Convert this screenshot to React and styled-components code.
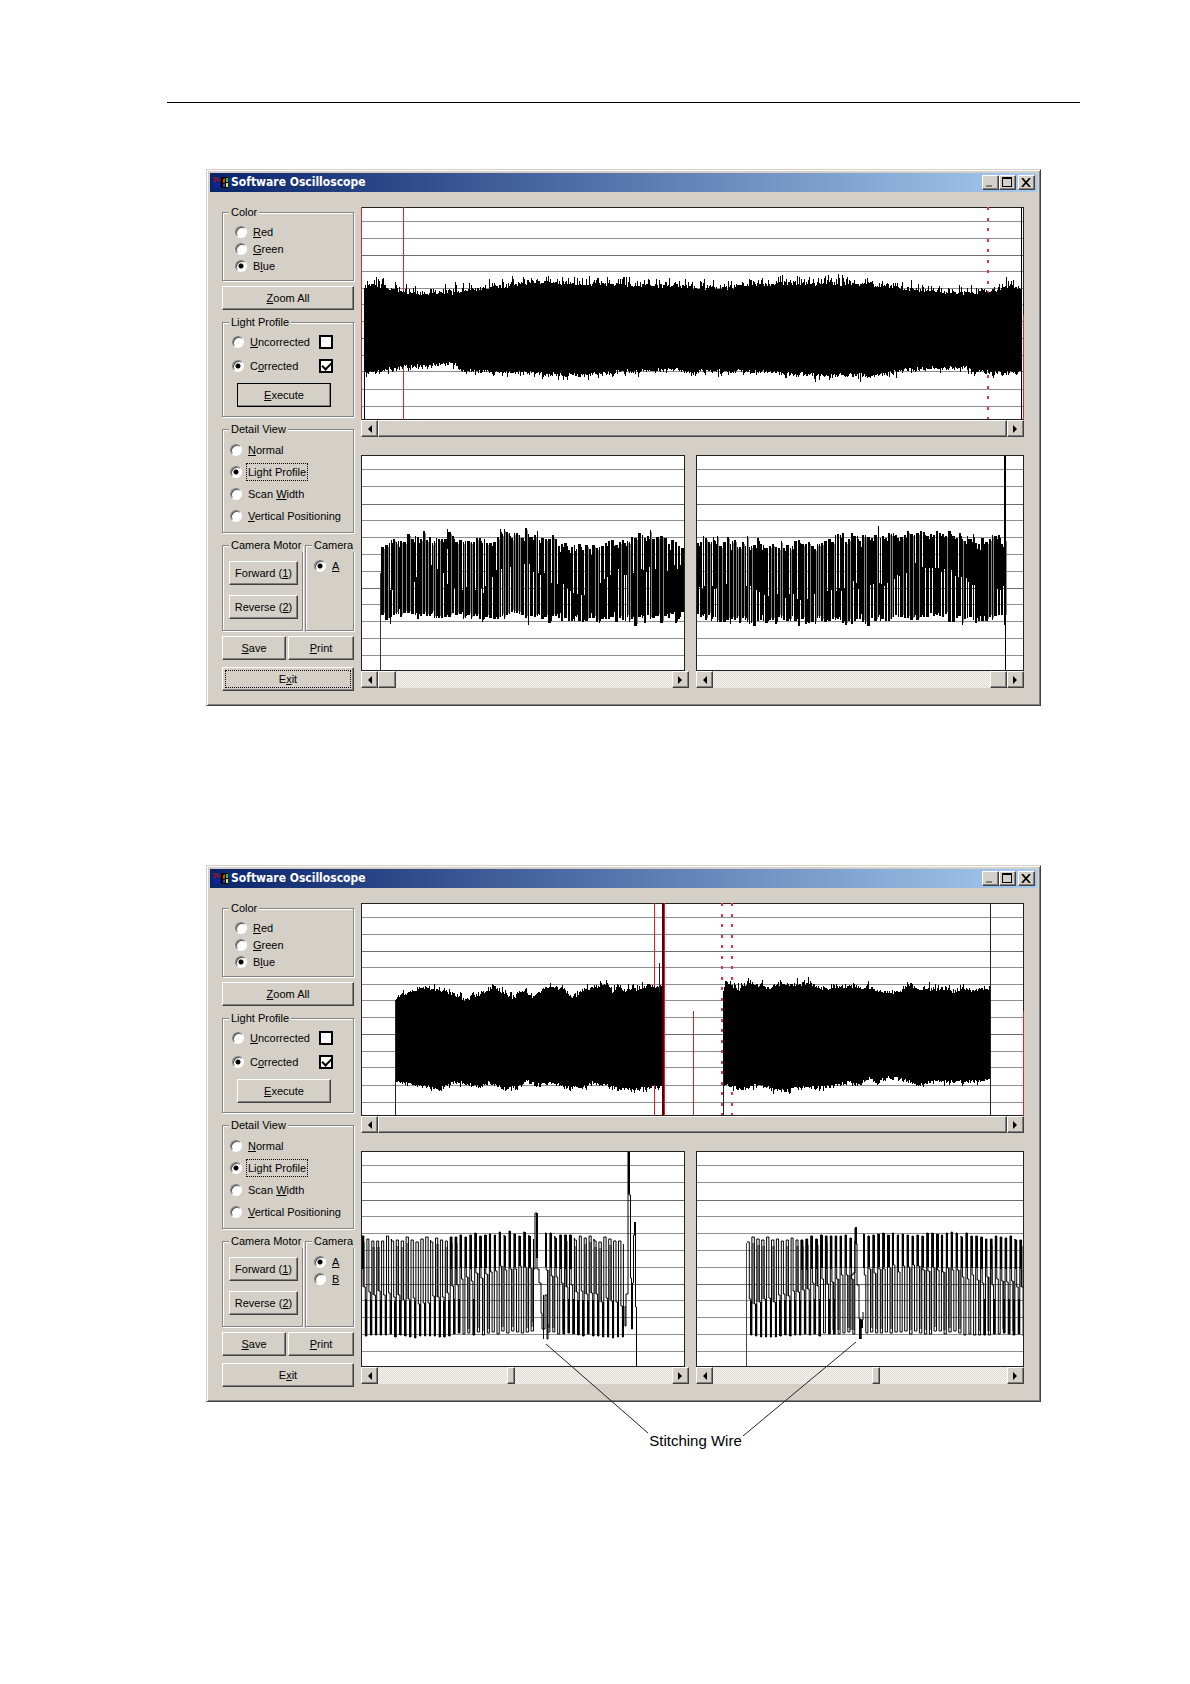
import React, { useId } from "react";
import styled, { createGlobalStyle, css } from "styled-components";

/* ---------- waveform helpers ---------- */

const makeRandom = (seed) => {
  let s = seed;
  return () => {
    s = (s * 16807) % 2147483647;
    return s / 2147483647;
  };
};

// linear interpolation through a list of [x, y] points
const curve = (points, x) => {
  if (x <= points[0][0]) return points[0][1];
  for (let i = 1; i < points.length; i++) {
    const [x1, y1] = points[i];
    if (x <= x1) {
      const [x0, y0] = points[i - 1];
      return y0 + ((y1 - y0) * (x - x0)) / (x1 - x0);
    }
  }
  return points[points.length - 1][1];
};

// filled band with ragged edges, one column for each pixel
const bandPath = ({ top, bottom, from, to, seed, rough }) => {
  const rnd = makeRandom(seed);
  let d = "";
  for (let x = from; x < to; x++) {
    const y0 = Math.round(curve(top, x) + 3 - rnd() * 4 - rnd() ** 4 * rough);
    const y1 = Math.round(curve(bottom, x) - 2 + rnd() * 4 + rnd() ** 5 * rough * 0.6);
    d += `M${x} ${y0}h1V${y1}h-1z`;
  }
  return d;
};

// dense detail trace, returned as a black and a grey path
const densePaths = ({ top, bottom, mid, from, to, seed }) => {
  const rnd = makeRandom(seed);
  let black = "";
  let grey = "";
  let x = from;
  while (x < to) {
    const y0 = Math.round(curve(top, x) + 4 - rnd() * 7 - rnd() ** 4 * 7);
    const y1 = Math.round(curve(bottom, x) - 3 + rnd() * 6 + rnd() ** 5 * 7);
    const m = Math.round(curve(mid, x) - 4 + rnd() * 8);
    const r = rnd();
    const w = r < 0.3 ? 1 : r < 0.75 ? 2 : 3;
    black += `M${x} ${y0}h${w}V${y1}h-${w}z`;
    x += w;
    const p = rnd();
    if (p < 0.27) black += `M${x} ${m}h1V${y1 - 2}h-1z`;
    else if (p < 0.54) black += `M${x} ${y0 + 3}h1V${m}h-1z`;
    else if (p < 0.94) grey += `M${x} ${y0 + 2}h1V${y1 - 2}h-1z`;
    else black += `M${x} ${y0 + 6}h1V${y1 - 5}h-1z`;
    x += 1;
  }
  return { black, grey };
};

// sampled trace drawn as steps: high, shoulder, low for every cycle
const stepPaths = ({ mid, from, to, seed, skip }) => {
  const rnd = makeRandom(seed);
  let line = "";
  let fill = "";
  let spikes = "";
  let x = from;
  let pen = false;
  while (x < to) {
    if (skip && x > skip[0] && x < skip[1]) {
      x = skip[1];
      pen = false;
    }
    const m = curve(mid, x) - 4 + rnd() * 8;
    const k = Math.max(0, Math.min(1, (m - 116) / 34));
    const high = 92 - (1 - k) * 6 - rnd() * 6;
    const low = 180 + k * 4 + rnd() * 3;
    const wHigh = 1 + k * 1.4;
    const wLow = 2.4 - k * 1.4;
    line += `${pen ? "L" : "M"}${x.toFixed(1)} ${high.toFixed(0)}h${wHigh.toFixed(1)}V${m.toFixed(0)}h1.5V${low.toFixed(0)}h${wLow.toFixed(1)}`;
    const high2 = high.toFixed(0);
    const px = Math.round(x);
    if (k < 0.7) spikes += `M${px} ${high2}h2V${(m - k * 30).toFixed(0)}h-2z`;
    if (k > 0.4) spikes += `M${px + 3} ${(m + (1 - k) * 30).toFixed(0)}h2V${low.toFixed(0)}h-2z`;
    if (rnd() < 0.6) {
      fill +=
        k > 0.5
          ? `M${px} ${(high + 6).toFixed(0)}h3V${m.toFixed(0)}h-3z`
          : `M${px + 2} ${m.toFixed(0)}h3V${(low - 4).toFixed(0)}h-3z`;
    }
    x += 4.9;
    line += `V${(high + 3).toFixed(0)}`;
    pen = true;
  }
  return { line, fill, spikes };
};

/* ---------- waveform data ---------- */

const OVERVIEW_LINES = [14, 31, 48, 64, 81, 97, 114, 131, 148, 164, 182, 199];
const DETAIL_LINES = [14, 31, 49, 65, 82, 99, 116, 133, 149, 166, 183, 200];

const BAND_FULL = bandPath({
  seed: 4711,
  from: 3,
  to: 661,
  rough: 9,
  top: [[3, 80], [12, 76], [22, 79], [42, 85], [62, 86], [89, 85], [112, 81], [146, 79], [166, 75], [196, 75], [229, 76], [262, 77], [296, 78], [329, 79], [349, 81], [362, 81], [379, 78], [416, 76], [472, 76], [516, 77], [539, 80], [579, 85], [602, 85], [626, 84], [649, 78], [661, 81]],
  bottom: [[3, 165], [22, 163], [42, 160], [92, 156], [99, 163], [139, 165], [166, 166], [206, 168], [246, 166], [296, 162], [312, 161], [329, 166], [339, 163], [406, 165], [466, 168], [516, 168], [546, 163], [572, 160], [602, 160], [622, 165], [660, 166]],
});

const BAND_A = bandPath({
  seed: 911,
  from: 35,
  to: 302,
  rough: 5,
  top: [[34, 97], [36, 93], [39, 91], [49, 88], [61, 84], [72, 86], [89, 89], [104, 96], [116, 91], [134, 84], [151, 94], [164, 87], [171, 93], [186, 83], [202, 85], [211, 94], [222, 86], [246, 82], [251, 88], [256, 82], [262, 87], [276, 86], [289, 82], [301, 84]],
  bottom: [[36, 178], [49, 181], [79, 186], [94, 178], [106, 181], [119, 184], [127, 179], [142, 186], [156, 184], [164, 178], [176, 182], [192, 179], [206, 185], [222, 184], [232, 179], [252, 184], [272, 187], [289, 184], [301, 184]],
});

const BAND_B = bandPath({
  seed: 3203,
  from: 362,
  to: 629,
  rough: 6,
  top: [[362, 85], [365, 79], [378, 86], [387, 78], [396, 81], [406, 85], [417, 80], [436, 81], [447, 80], [462, 85], [476, 83], [489, 82], [497, 85], [506, 82], [516, 87], [526, 90], [539, 87], [549, 81], [559, 86], [572, 85], [592, 87], [626, 85]],
  bottom: [[362, 182], [382, 186], [396, 182], [416, 187], [439, 185], [472, 183], [489, 179], [499, 181], [507, 175], [514, 180], [529, 174], [546, 178], [559, 182], [572, 177], [599, 179], [629, 177]],
});

const DENSE_LEFT = densePaths({
  seed: 77,
  from: 20,
  to: 324,
  top: [[20, 88], [60, 84], [90, 84], [130, 88], [140, 80], [170, 80], [190, 88], [215, 93], [240, 89], [285, 83], [324, 90]],
  bottom: [[20, 162], [50, 160], [100, 161], [120, 162], [150, 157], [180, 162], [240, 165], [324, 159]],
  mid: [[20, 137], [45, 130], [62, 112], [72, 111], [90, 136], [120, 136], [135, 112], [165, 110], [190, 128], [222, 142], [250, 118], [290, 116], [324, 110]],
});

const DENSE_RIGHT = densePaths({
  seed: 5150,
  from: 1,
  to: 309,
  top: [[0, 84], [34, 88], [84, 90], [120, 90], [140, 84], [184, 81], [224, 79], [260, 80], [270, 86], [309, 85]],
  bottom: [[0, 160], [30, 165], [90, 164], [150, 165], [200, 163], [240, 159], [280, 164], [309, 160]],
  mid: [[0, 130], [30, 132], [60, 136], [84, 142], [120, 140], [150, 130], [190, 130], [220, 110], [245, 117], [260, 120], [277, 132], [309, 135]],
});

const STEP_LEFT = stepPaths({
  seed: 29,
  from: 1,
  to: 262,
  skip: [171, 184],
  mid: [[0, 140], [30, 146], [50, 150], [75, 148], [110, 125], [150, 116], [178, 118], [205, 135], [245, 150], [265, 152]],
});

const STEP_RIGHT = stepPaths({
  seed: 388,
  from: 51,
  to: 324,
  skip: [154, 167],
  mid: [[51, 152], [80, 146], [110, 135], [150, 126], [185, 117], [240, 116], [262, 124], [290, 130], [328, 135]],
});

/* ---------- small parts ---------- */

// "&Red" -> underlined R
const Mnemonic = ({ text }) => {
  const at = text.indexOf("&");
  if (at < 0) return text;
  return (
    <span>
      {text.slice(0, at)}
      <u>{text[at + 1]}</u>
      {text.slice(at + 2)}
    </span>
  );
};

const Option = ({ name, text, checked, focused, tall }) => (
  <OptionLabel $tall={tall}>
    <Radio type="radio" name={name} defaultChecked={checked} />
    <OptionText $focused={focused}>
      <Mnemonic text={text} />
    </OptionText>
  </OptionLabel>
);

const AppIcon = () => (
  <svg width="17" height="13" viewBox="0 0 17 13" aria-hidden="true">
    <path d="M8 2l3-1h5v11H9l-1-1z" fill="#000" />
    <path d="M1 2h4M3 3h6M1 5h3M5 5h4" stroke="#c01828" />
    <path d="M1 7h4M3 9h5M1 11h3M6 8h3M5 11h4" stroke="#1a22d8" />
    <path d="M11 3l2-1v4l-2 1z" fill="#e03a20" />
    <path d="M14 2h2v4h-2z" fill="#28c83c" />
    <path d="M11 8l2-1v4h-2z" fill="#2840e0" />
    <path d="M14 7h2v4h-2z" fill="#f0e030" />
  </svg>
);

const Arrow = ({ left }) => (
  <svg width="5" height="8" viewBox="0 0 5 8" aria-hidden="true">
    <path d={left ? "M5 0v8L1 4z" : "M0 0v8l4-4z"} />
  </svg>
);

const ScrollBar = ({ label, start, size }) => (
  <ScrollRow role="group" aria-label={label}>
    <ScrollButton type="button" aria-label="Scroll left">
      <Arrow left />
    </ScrollButton>
    <Track>
      <Thumb $start={start} $size={size} />
    </Track>
    <ScrollButton type="button" aria-label="Scroll right">
      <Arrow />
    </ScrollButton>
  </ScrollRow>
);

const GridLines = ({ lines, width }) =>
  lines.map((y, i) => (
    <rect key={y} x="0" y={y} width={width} height="1" fill={i === 2 || i === 7 ? "#6c6c6c" : "#8e8e8e"} />
  ));

const Overview = ({ children }) => (
  <Chart $tall={213} viewBox="0 0 663 213" preserveAspectRatio="none">
    <rect width="663" height="213" fill="#fff" />
    <GridLines lines={OVERVIEW_LINES} width={663} />
    <path d="M0 0h663v1H0zM0 212h663v1H0zM0 0h1v213H0zM662 0h1v213h-1z" fill="#222" />
    {children}
    <path d="M662 108h1v105h-1z" fill="#e0202c" />
  </Chart>
);

const Detail = ({ width, children }) => (
  <Chart $tall={216} viewBox={`0 0 ${width} 216`} preserveAspectRatio="none">
    <rect width={width} height="216" fill="#fff" />
    <GridLines lines={DETAIL_LINES} width={width} />
    {children}
    <path d={`M0 0h${width}v1H0zM0 215h${width}v1H0zM0 0h1v216H0zM${width - 1} 0h1v216h-1z`} fill="#222" />
  </Chart>
);

/* ---------- oscilloscope window ---------- */

const Oscilloscope = ({ cameras, focusExit, defaultExecute, overview, left, right, scroll }) => {
  const id = useId();
  return (
    <Window>
      <TitleBar>
        <AppIcon />
        <Title>Software Oscilloscope</Title>
        <WindowButton type="button" aria-label="Minimize">
          <svg width="10" height="9" viewBox="0 0 10 9">
            <path d="M1 7h6v2H1z" fill="#808080" />
          </svg>
        </WindowButton>
        <WindowButton type="button" aria-label="Maximize">
          <svg width="10" height="10" viewBox="0 0 10 10">
            <path d="M0 0h10v10H0zM1 2v7h8V2z" fillRule="evenodd" />
          </svg>
        </WindowButton>
        <CloseButton type="button" aria-label="Close">
          <svg width="10" height="9" viewBox="0 0 10 9">
            <path d="M1 0l8 9M9 0L1 9" stroke="#000" strokeWidth="1.7" />
          </svg>
        </CloseButton>
      </TitleBar>
      <Body>
        <Sidebar>
          <Group>
            <Legend>Color</Legend>
            <ColorOptions>
              <Option name={`${id}color`} text="&Red" />
              <Option name={`${id}color`} text="&Green" />
              <Option name={`${id}color`} text="B&lue" checked />
            </ColorOptions>
          </Group>
          <Button type="button">
            <Mnemonic text="&Zoom All" />
          </Button>
          <Group>
            <Legend>Light Profile</Legend>
            <ProfileOptions>
              <ProfileRow>
                <Option name={`${id}profile`} text="&Uncorrected" tall />
                <CheckBox type="checkbox" aria-label="Show uncorrected" />
              </ProfileRow>
              <ProfileRow>
                <Option name={`${id}profile`} text="C&orrected" checked tall />
                <CheckBox type="checkbox" aria-label="Show corrected" defaultChecked />
              </ProfileRow>
              <ExecuteButton type="button" $default={defaultExecute}>
                <Mnemonic text="&Execute" />
              </ExecuteButton>
            </ProfileOptions>
          </Group>
          <Group>
            <Legend>Detail View</Legend>
            <ViewOptions>
              <Option name={`${id}view`} text="&Normal" tall />
              <Option name={`${id}view`} text="Li&ght Profile" checked focused tall />
              <Option name={`${id}view`} text="Scan &Width" tall />
              <Option name={`${id}view`} text="&Vertical Positioning" tall />
            </ViewOptions>
          </Group>
          <CameraRow>
            <Group>
              <Legend>Camera Motor</Legend>
              <MotorButtons>
                <Button type="button">
                  <Mnemonic text="Forward (&1)" />
                </Button>
                <Button type="button">
                  <Mnemonic text="Reverse (&2)" />
                </Button>
              </MotorButtons>
            </Group>
            <Group>
              <Legend>Camera</Legend>
              <CameraOptions>
                {cameras.map((camera, i) => (
                  <Option key={camera} name={`${id}camera`} text={`&${camera}`} checked={i === 0} />
                ))}
              </CameraOptions>
            </Group>
          </CameraRow>
          <Actions>
            <Button type="button">
              <Mnemonic text="&Save" />
            </Button>
            <Button type="button">
              <Mnemonic text="&Print" />
            </Button>
            <ExitButton type="button" $focused={focusExit}>
              <Mnemonic text="E&xit" />
            </ExitButton>
          </Actions>
        </Sidebar>
        <Plots>
          <Panel>
            <Overview>{overview}</Overview>
            <ScrollBar label="Overview position" start="0" size="100%" />
          </Panel>
          <DetailRow>
            <Panel>
              <NarrowPlot>
                <Detail width={324}>{left}</Detail>
              </NarrowPlot>
              <ScrollBar label="Left detail position" {...scroll[0]} />
            </Panel>
            <Panel>
              <Detail width={328}>{right}</Detail>
              <ScrollBar label="Right detail position" {...scroll[1]} />
            </Panel>
          </DetailRow>
        </Plots>
      </Body>
    </Window>
  );
};

const App = () => {
  return (
    <Page>
      <GlobalStyle />
      <Rule />
      <Figure>
        <Oscilloscope
          cameras={["A"]}
          focusExit
          defaultExecute
          scroll={[
            { start: "0", size: "18px" },
            { start: "auto", size: "17px" },
          ]}
          overview={
            <>
              <path d="M0 0h1v213H0zM42 0h1v213h-1z" fill="#e8202c" />
              <Marker d="M627 0v212" />
              <path d={BAND_FULL} />
              <path d="M3 160h1v53H3zM660 0h1v213h-1z" />
            </>
          }
          left={
            <>
              <path d="M19 118h1v98h-1z" fill="#333" />
              <path d={DENSE_LEFT.black} />
              <path d={DENSE_LEFT.grey} fill="#858585" />
              <path d="M86 74h1v20h-1zM29 150h1v19h-1zM167 150h1v20h-1z" />
            </>
          }
          right={
            <>
              <path d={DENSE_RIGHT.black} />
              <path d={DENSE_RIGHT.grey} fill="#858585" />
              <path d="M182 71h1v30h-1zM308 0h2v170h-2zM309 160h1v56h-1z" />
            </>
          }
        />
      </Figure>
      <Figure>
        <Oscilloscope
          cameras={["A", "B"]}
          scroll={[
            { start: "44%", size: "8px" },
            { start: "54%", size: "8px" },
          ]}
          overview={
            <>
              <path d="M293 0h1v213h-1zM332 108h1v105h-1z" fill="#d8202c" />
              <path d={BAND_A} />
              <path d={BAND_B} />
              <path d="M34 97h1v116h-1zM298 60h1v30h-1zM362 170h1v43h-1zM629 0h1v213h-1z" fill="#222" />
              <path d="M301 0h2v213h-2z" fill="#5a0008" />
              <path d="M303 0h1v213h-1z" fill="#d8202c" />
              <Marker d="M361 0v212M371 0v80M371 189v23" />
            </>
          }
          left={
            <>
              <path d={STEP_LEFT.fill} fill="#8a8a8a" />
              <Trace d={STEP_LEFT.line} />
              <path d={STEP_LEFT.spikes} />
              <Trace d="M172 171V118h2V62h2v56h2v14h2v30h1v16h3V144h2v44h1v-15" />
              <path d="M175 62h2v45h-2zM182 144h1v44h-1zM267 0h2v43h-2zM273 71h2v13h-2z" />
              <Trace d="M264 155v20h1V143h2V0h1v44h1.500v83h1V178h1V132h1V84h2V71v85h1v60" />
            </>
          }
          right={
            <>
              <path d={STEP_RIGHT.fill} fill="#8a8a8a" />
              <Trace d={STEP_RIGHT.line} />
              <path d={STEP_RIGHT.spikes} />
              <path d="M50 92h1v124h-1z" fill="#444" />
              <Trace d="M155 179V124h2V122h2V77h1v16h1v41h2v34h2V188v-19h2v-8" />
              <path d="M159 76h2v17h-2zM163 168h2v20h-2zM165 169h2v8h-2z" />
            </>
          }
        />
        <Caption>Stitching Wire</Caption>
        <Callout viewBox="0 0 835 580" preserveAspectRatio="none" aria-hidden="true">
          <path d="M340 479l102 89M650 477l-113 94" stroke="#222" fill="none" />
        </Callout>
      </Figure>
    </Page>
  );
};

export default App;

/* ---------- styles ---------- */

const GlobalStyle = createGlobalStyle`
  * {
    box-sizing: border-box;
  }
  body {
    margin: 0;
    background: #fff;
  }
`;

const Page = styled.main`
  min-height: 100vh;
  padding: 102px 110px 0 167px;
  font-family: "Liberation Sans", Arial, sans-serif;
  font-size: 11px;
  line-height: 14px;
  color: #000;
`;

const Rule = styled.hr`
  height: 1px;
  margin: 0 0 66px;
  border: 0;
  background: #000;
`;

const Figure = styled.figure`
  position: relative;
  margin: 0 0 159px;
  padding: 0 39px;
`;

const Caption = styled.figcaption`
  padding: 30px 0 0 144px;
  font-size: 15px;
  line-height: 18px;
  text-align: center;
`;

const Callout = styled.svg`
  position: absolute;
  top: 0;
  left: 39px;
  width: calc(100% - 78px);
  height: 580px;
  pointer-events: none;
`;

const Window = styled.section`
  padding: 3px;
  border: 1px solid;
  border-color: #d4d0c8 #404040 #404040 #d4d0c8;
  background: #d4d0c8;
  box-shadow: inset 1px 1px 0 #fff, inset -1px -1px 0 #808080;
`;

const TitleBar = styled.header`
  display: flex;
  align-items: center;
  height: 19px;
  padding: 0 2px;
  background: linear-gradient(90deg, #0a246a, #a6caf0);
`;

const Title = styled.h2`
  flex: 1;
  margin: 0 0 0 2px;
  font-family: "DejaVu Sans Condensed", "Open Sans", sans-serif;
  font-size: 12px;
  font-weight: 700;
  line-height: 19px;
  color: #fff;
`;

const raised = css`
  border: 1px solid;
  border-color: #fff #404040 #404040 #fff;
  background: #d4d0c8;
  box-shadow: inset -1px -1px 0 #808080;
`;

const WindowButton = styled.button`
  ${raised}
  display: flex;
  align-items: center;
  justify-content: center;
  width: 17px;
  height: 15px;
  padding: 0 1px 1px 0;
`;

const CloseButton = styled(WindowButton)`
  margin-left: 2px;
`;

const Body = styled.div`
  display: flex;
  gap: 7px;
  padding: 13px 13px 11px 12px;
`;

const Sidebar = styled.div`
  display: flex;
  flex: none;
  flex-direction: column;
  gap: 5px;
  width: 132px;
`;

const Group = styled.fieldset`
  min-width: 0;
  margin: 0;
  padding: 0 0 0 6px;
  border: 1px solid #848284;
  box-shadow: 1px 1px 0 #fff, inset 1px 1px 0 #fff;
`;

const Legend = styled.legend`
  padding: 0 2px;
  background: #d4d0c8;
  white-space: nowrap;
`;

const ColorOptions = styled.div`
  padding: 4px 0 6px 6px;
`;

const ProfileOptions = styled.div`
  padding: 1px 20px 9px 3px;
`;

const ProfileRow = styled.div`
  display: flex;
  align-items: center;
  justify-content: space-between;
  height: 24px;
`;

const ViewOptions = styled.div`
  padding: 3px 0 5px 1px;
`;

const CameraRow = styled.div`
  display: grid;
  grid-template-columns: 81px 1fr;
  gap: 2px;
`;

const MotorButtons = styled.div`
  display: grid;
  gap: 10px;
  padding: 9px 4px 11px 0;
`;

const CameraOptions = styled.div`
  padding: 5px 0 0 2px;
`;

const Actions = styled.div`
  display: grid;
  grid-template-columns: 64px 66px;
  gap: 7px 2px;
`;

const OptionLabel = styled.label`
  display: flex;
  align-items: center;
  gap: 4px;
  height: ${({ $tall }) => ($tall ? 22 : 17)}px;
`;

const OptionText = styled.span`
  padding: 1px;
  border: 1px dotted ${({ $focused }) => ($focused ? "#000" : "transparent")};
  white-space: nowrap;
`;

const Radio = styled.input`
  flex: none;
  width: 12px;
  height: 12px;
  margin: 0;
  border: 1px solid;
  border-color: #808080 #fff #fff #808080;
  border-radius: 50%;
  appearance: none;
  background: #fff;
  box-shadow: inset 1px 1px 0 #505050;

  &:checked {
    background: radial-gradient(circle, #000 2px, #fff 3px);
  }
`;

const CheckBox = styled.input`
  flex: none;
  width: 14px;
  height: 14px;
  margin: 0;
  border: 2px solid #000;
  appearance: none;
  background: #fff;

  &:checked::before {
    content: "";
    display: block;
    width: 8px;
    height: 4px;
    margin: 1px;
    border: solid #000;
    border-width: 0 0 2px 2px;
    transform: rotate(-45deg);
  }
`;

const Button = styled.button`
  ${raised}
  height: 24px;
  padding: 0 0 1px;
  font: inherit;
  color: #000;
  white-space: nowrap;
`;

const ExecuteButton = styled(Button)`
  display: block;
  width: 94px;
  margin: 5px 0 0 5px;
  outline: ${({ $default }) => ($default ? "1px solid #000" : "none")};
  outline-offset: -1px;
`;

const ExitButton = styled(Button)`
  grid-column: 1 / -1;
  outline: ${({ $focused }) => ($focused ? "1px dotted #000" : "none")};
  outline-offset: -4px;
`;

const Plots = styled.div`
  display: grid;
  flex: 1;
  align-content: start;
  gap: 18px;
  min-width: 0;
  padding-top: 2px;
`;

const Panel = styled.div`
  min-width: 0;
`;

const DetailRow = styled.div`
  display: grid;
  grid-template-columns: 1fr 1fr;
  gap: 7px;
`;

const NarrowPlot = styled.div`
  margin-right: 4px;
`;

const Chart = styled.svg`
  display: block;
  width: 100%;
  height: ${({ $tall }) => $tall}px;
  shape-rendering: crispEdges;
`;

const Trace = styled.path`
  fill: none;
  stroke: #000;
  stroke-width: 1;
  shape-rendering: auto;
`;

// dashed red limit line
const Marker = styled.path`
  stroke: #ee3050;
  stroke-width: 2;
  stroke-dasharray: 3 7.5;
`;

const ScrollRow = styled.div`
  display: flex;
  height: 17px;
`;

const ScrollButton = styled.button`
  ${raised}
  display: flex;
  flex: none;
  align-items: center;
  justify-content: center;
  width: 17px;
  padding: 0;
`;

const Track = styled.div`
  display: flex;
  flex: 1;
  min-width: 0;
  background: repeating-conic-gradient(#f6f4f0 0 25%, #dedbd4 0 50%) 0 0 / 2px 2px;
`;

const Thumb = styled.div`
  ${raised}
  width: ${({ $size }) => $size};
  margin-left: ${({ $start }) => $start};
`;
